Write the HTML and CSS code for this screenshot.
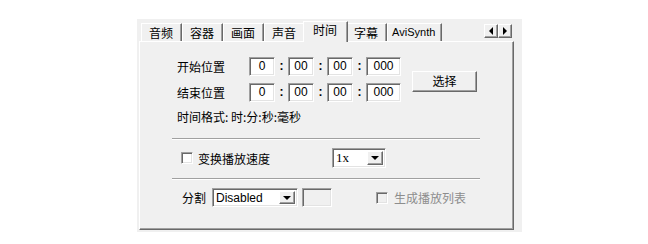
FILE: index.html
```html
<!DOCTYPE html>
<html lang="zh">
<head>
<meta charset="utf-8">
<title>时间</title>
<link rel="stylesheet" href="styles.css">
</head>
<body>
<div class="dialog">
  <div class="tabstrip">
    <div class="tab">音频</div>
    <div class="tab">容器</div>
    <div class="tab">画面</div>
    <div class="tab">声音</div>
    <div class="tab active">时间</div>
    <div class="tab">字幕</div>
    <div class="tab latin">AviSynth</div>
    <div class="spin">
      <div class="spinbtn"><span class="tri-left"></span></div>
      <div class="spinbtn"><span class="tri-right"></span></div>
    </div>
  </div>
  <div class="panel">
    <div class="timeblock">
      <div class="timerows">
        <div class="trow">
          <span class="label">开始位置</span>
          <span class="field">0</span><span class="colon">:</span>
          <span class="field">00</span><span class="colon">:</span>
          <span class="field">00</span><span class="colon">:</span>
          <span class="field wide">000</span>
        </div>
        <div class="trow">
          <span class="label">结束位置</span>
          <span class="field">0</span><span class="colon">:</span>
          <span class="field">00</span><span class="colon">:</span>
          <span class="field">00</span><span class="colon">:</span>
          <span class="field wide">000</span>
        </div>
        <div class="fmt">时间格式: 时:分:秒:毫秒</div>
      </div>
      <div class="btn">选择</div>
    </div>
    <div class="sep first"></div>
    <div class="speedrow">
      <span class="chklabel"><span class="check"></span>变换播放速度</span>
      <span class="combo speed"><span class="combotext serif">1x</span><span class="dropbtn"><span class="tri-down"></span></span></span>
    </div>
    <div class="sep second"></div>
    <div class="splitrow">
      <span class="splitlabel">分割</span>
      <span class="combo split"><span class="combotext">Disabled</span><span class="dropbtn"><span class="tri-down"></span></span></span>
      <span class="smallbox"></span>
      <span class="check disabled"></span>
      <span class="disabledtext">生成播放列表</span>
    </div>
  </div>
</div>
</body>
</html>
```

FILE: styles.css
```css
body {
  margin: 0;
  background: #ffffff;
  font-family: "Noto Sans CJK SC", "Liberation Sans", sans-serif;
  font-size: 12px;
  color: #000;
}

.dialog {
  margin: 19px 0 0 137px;
  width: 385px;
  height: 213px;
  box-sizing: border-box;
  padding: 0 8px 2px 2px;
  background: #f0f0f0;
  display: flex;
  flex-direction: column;
}

.tabstrip {
  height: 22px;
  display: flex;
  align-items: flex-end;
  padding-left: 2px;
}

.tab {
  height: 18px;
  box-sizing: border-box;
  padding: 0 8px 0 7px;
  border-top: 1px solid #ffffff;
  border-left: 1px solid #ffffff;
  border-right: 1px solid #696969;
  box-shadow: inset -1px 0 #a0a0a0;
  line-height: 17px;
  white-space: nowrap;
  background: #f0f0f0;
}

.tab.latin {
  font-family: "Liberation Sans", sans-serif;
  font-size: 11px;
  padding: 0 6px 0 4px;
}

.tab.active {
  height: 21px;
  margin: 0 -2px -1px -2px;
  padding: 0 10px 0 9px;
  line-height: 15px;
  position: relative;
  z-index: 1;
}

.spin {
  margin-left: auto;
  margin-right: 2px;
  align-self: flex-start;
  margin-top: 5px;
  display: flex;
}

.spinbtn {
  width: 14px;
  height: 14px;
  box-sizing: border-box;
  border-top: 1px solid #ffffff;
  border-left: 1px solid #ffffff;
  border-right: 1px solid #696969;
  border-bottom: 1px solid #696969;
  box-shadow: inset -1px -1px #a0a0a0;
  background: #f0f0f0;
  display: flex;
  align-items: center;
  justify-content: center;
}

.tri-left {
  width: 0;
  height: 0;
  border-top: 4px solid transparent;
  border-bottom: 4px solid transparent;
  border-right: 4px solid #000;
}

.tri-right {
  width: 0;
  height: 0;
  border-top: 4px solid transparent;
  border-bottom: 4px solid transparent;
  border-left: 4px solid #000;
}

.tri-down {
  width: 0;
  height: 0;
  border-left: 4px solid transparent;
  border-right: 4px solid transparent;
  border-top: 4px solid #000;
}

.panel {
  flex: 1;
  box-sizing: border-box;
  border-top: 1px solid #ffffff;
  border-left: 1px solid #ffffff;
  border-right: 1px solid #696969;
  border-bottom: 1px solid #696969;
  box-shadow: inset -1px -1px #a0a0a0;
  padding: 15px 33px 0 32px;
  display: flex;
  flex-direction: column;
}

.timeblock {
  display: flex;
  padding-left: 5px;
}

.timerows {
  display: flex;
  flex-direction: column;
  gap: 7px;
}

.trow {
  display: flex;
  align-items: center;
  height: 19px;
}

.label {
  width: 72px;
}

.field {
  width: 26px;
  height: 19px;
  box-sizing: border-box;
  border-top: 1px solid #a0a0a0;
  border-left: 1px solid #a0a0a0;
  border-right: 1px solid #ffffff;
  border-bottom: 1px solid #ffffff;
  box-shadow: inset 1px 1px #696969, inset -1px -1px #e3e3e3;
  background: #ffffff;
  text-align: center;
  font-family: "Liberation Sans", sans-serif;
  font-size: 12px;
  line-height: 17px;
}

.field.wide {
  width: 35px;
}

.colon {
  width: 13px;
  text-align: center;
  font-family: "Liberation Sans", sans-serif;
  font-weight: bold;
  font-size: 12px;
  line-height: 17px;
}

.fmt {
  line-height: 16px;
}

.btn {
  margin-left: 11px;
  margin-top: 14px;
  width: 65px;
  height: 21px;
  box-sizing: border-box;
  border-top: 1px solid #ffffff;
  border-left: 1px solid #ffffff;
  border-right: 1px solid #696969;
  border-bottom: 1px solid #696969;
  box-shadow: inset -1px -1px #a0a0a0;
  text-align: center;
  line-height: 18px;
}

.sep {
  border-top: 1px solid #a0a0a0;
  border-bottom: 1px solid #ffffff;
}

.sep.first {
  margin-top: 13px;
}

.sep.second {
  margin-top: 10px;
}

.speedrow {
  margin-top: 8px;
  height: 20px;
  display: flex;
  align-items: center;
  padding-left: 9px;
}

.chklabel {
  width: 151px;
  display: flex;
  align-items: center;
}

.check {
  width: 12px;
  height: 12px;
  box-sizing: border-box;
  border-top: 1px solid #a0a0a0;
  border-left: 1px solid #a0a0a0;
  border-right: 1px solid #ffffff;
  border-bottom: 1px solid #ffffff;
  box-shadow: inset 1px 1px #696969, inset -1px -1px #e3e3e3;
  background: #ffffff;
  margin-right: 5px;
  flex: none;
}

.check.disabled {
  background: #f0f0f0;
  margin-left: 44px;
  margin-right: 6px;
}

.combo {
  display: flex;
  align-items: center;
  box-sizing: border-box;
  border-top: 1px solid #a0a0a0;
  border-left: 1px solid #a0a0a0;
  border-right: 1px solid #ffffff;
  border-bottom: 1px solid #ffffff;
  box-shadow: inset 1px 1px #696969, inset -1px -1px #e3e3e3;
  background: #ffffff;
  padding: 2px;
}

.combo.speed {
  width: 54px;
  height: 20px;
}

.combo.split {
  width: 86px;
  height: 19px;
  margin-left: 6px;
}

.combotext {
  flex: 1;
  padding-left: 1px;
  font-family: "Liberation Sans", sans-serif;
  font-size: 12px;
  line-height: 14px;
}

.combotext.serif {
  font-family: "Liberation Serif", serif;
  font-size: 13px;
}

.dropbtn {
  width: 16px;
  height: 100%;
  box-sizing: border-box;
  border-top: 1px solid #ffffff;
  border-left: 1px solid #ffffff;
  border-right: 1px solid #696969;
  border-bottom: 1px solid #696969;
  box-shadow: inset -1px -1px #a0a0a0;
  background: #f0f0f0;
  display: flex;
  align-items: center;
  justify-content: center;
}

.sep + .splitrow {
  margin-top: 8px;
}

.splitrow {
  height: 19px;
  display: flex;
  align-items: center;
  padding-left: 10px;
}

.smallbox {
  width: 30px;
  height: 19px;
  margin-left: 4px;
  box-sizing: border-box;
  border-top: 1px solid #a0a0a0;
  border-left: 1px solid #a0a0a0;
  border-right: 1px solid #ffffff;
  border-bottom: 1px solid #ffffff;
  box-shadow: inset 1px 1px #696969, inset -1px -1px #e3e3e3;
  background: #f0f0f0;
}

.disabledtext {
  color: #8d8d8d;
}
```
